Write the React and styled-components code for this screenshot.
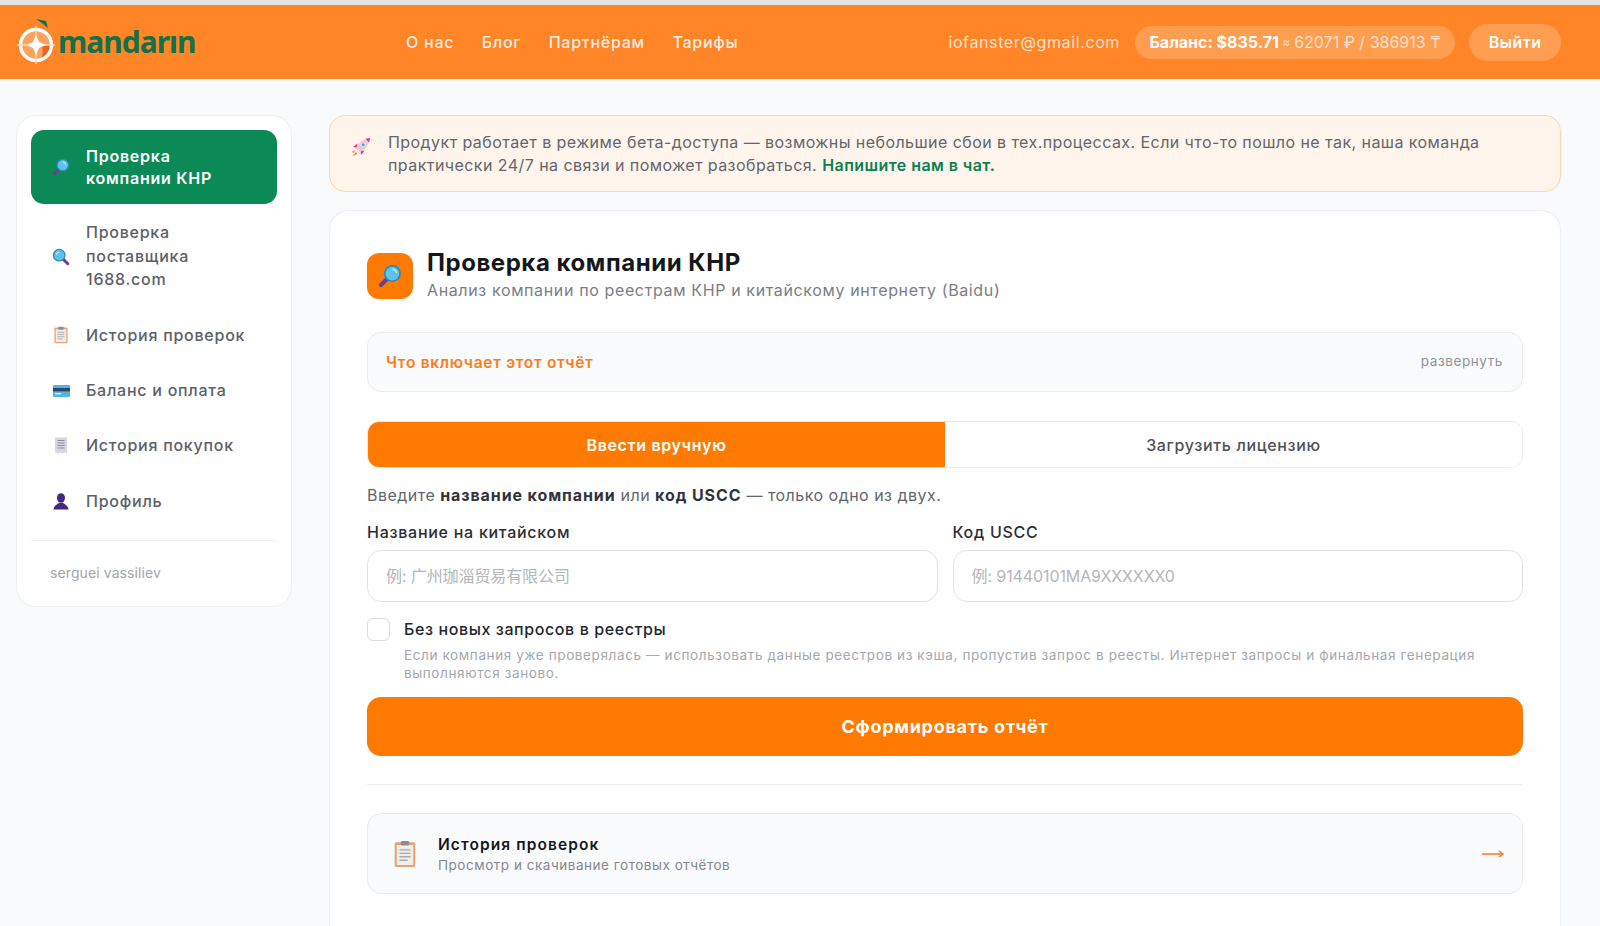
import React from 'react'
import styled, { createGlobalStyle } from 'styled-components'

const GlobalStyle = createGlobalStyle`
  html, body {
    margin: 0;
    height: 100%;
    overflow: hidden;
    background: #f8fafc;
  }
  * {
    box-sizing: border-box;
  }
  body {
    font-family: Inter, "Noto Sans CJK SC", "Noto Sans", sans-serif;
    color: #14171c;
  }
`

const TopStrip = styled.div`
  height: 5px;
  background: #e4e4e4;
`

const Header = styled.header`
  height: 74px;
  background: #ff8526;
  display: flex;
  align-items: center;
  padding: 0 39px 0 16px;
`

const Logo = styled.div`
  width: 390px;
  display: flex;
  align-items: center;
  gap: 2px;
`

const LogoText = styled.span`
  font-family: "Noto Sans", sans-serif;
  font-size: 30px;
  font-weight: 700;
  letter-spacing: -1px;
  color: #12704a;
  line-height: 1;
`

const Nav = styled.nav`
  display: flex;
  gap: 27.5px;
`

const NavLink = styled.a`
  color: rgba(255, 255, 255, 0.88);
  font-size: 16px;
  font-weight: 500;
  letter-spacing: 0.75px;
`

const HeaderRight = styled.div`
  margin-left: auto;
  display: flex;
  align-items: center;
`

const Email = styled.span`
  color: rgba(255, 255, 255, 0.78);
  font-size: 16px;
  letter-spacing: 0.62px;
  margin-right: 15px;
`

const BalancePill = styled.div`
  height: 33px;
  width: 320px;
  border-radius: 17px;
  background: rgba(255, 255, 255, 0.2);
  display: flex;
  align-items: center;
  justify-content: center;
  font-size: 16px;
  color: rgba(255, 255, 255, 0.72);
  white-space: nowrap;
  margin-right: 14px;
`

const BalanceStrong = styled.strong`
  color: #fff;
  font-weight: 700;
  letter-spacing: 0;
  margin-right: 4px;
`

const Approx = styled.span`
  font-size: 11px;
  margin-right: 4px;
`

const LogoutButton = styled.button`
  width: 92px;
  height: 37px;
  border: 0;
  border-radius: 19px;
  background: rgba(255, 255, 255, 0.2);
  color: #fff;
  font: 600 16px Inter, sans-serif;
  letter-spacing: 0.4px;
`

const Page = styled.div`
  display: grid;
  grid-template-columns: 276px 1232px;
  gap: 37px;
  padding: 36px 39px 0 16px;
  height: 847px;
  overflow: hidden;
  align-items: start;
`

const Sidebar = styled.aside`
  background: #fff;
  border: 1px solid #eceff3;
  border-radius: 20px;
  padding: 14px;
  height: 492px;
`

const SideList = styled.div`
  display: flex;
  flex-direction: column;
  gap: 3px;
`

const SideItem = styled.a`
  display: flex;
  align-items: center;
  gap: 15px;
  padding: ${p => (p.$active ? '15px' : '14.4px')} 20px;
  border-radius: 13px;
  font-size: 16px;
  line-height: ${p => (p.$active ? '22px' : '23.5px')};
  font-weight: ${p => (p.$active ? 600 : 500)};
  letter-spacing: 0.75px;
  background: ${p => (p.$active ? '#0b8a58' : 'transparent')};
  color: ${p => (p.$active ? '#fff' : '#5c6068')};
`

const SideIcon = styled.span`
  flex: 0 0 20px;
  display: flex;
  justify-content: center;
`

const SideDivider = styled.hr`
  border: 0;
  border-top: 1px solid #eceef1;
  margin: 13px 0 0;
`

const SideUser = styled.div`
  padding: 23px 19px 0;
  font-size: 14px;
  line-height: 18px;
  color: #a3a6ab;
  letter-spacing: 0.1px;
`

const Main = styled.main`
  display: flex;
  flex-direction: column;
  gap: 18px;
`

const Banner = styled.div`
  height: 77px;
  background: #fff5ec;
  border: 1px solid #fdd5b5;
  border-radius: 16px;
  padding: 15px 40px 0 21px;
  display: flex;
  gap: 17px;
`

const BannerIcon = styled.span`
  flex: 0 0 20px;
  padding-top: 6px;
`

const BannerText = styled.div`
  font-size: 16px;
  line-height: 23.4px;
  letter-spacing: 0.44px;
  color: #62666d;
`

const BannerLine = styled.div`
  white-space: nowrap;
`

const BannerLink = styled.a`
  color: #0b8050;
  font-weight: 600;
  margin-left: 5px;
`

const Panel = styled.section`
  background: #fff;
  border: 1px solid #eceff3;
  border-bottom: 0;
  border-radius: 20px 20px 0 0;
  padding: 42px 37px 0 37px;
  height: 760px;
`

const TitleRow = styled.div`
  display: flex;
  align-items: center;
  gap: 14px;
  height: 46px;
`

const TitleIcon = styled.div`
  width: 46px;
  height: 46px;
  border-radius: 12px;
  background: #ff7a00;
  display: flex;
  align-items: center;
  justify-content: center;
`

const Title = styled.h1`
  margin: -2px 0 0;
  font-size: 24px;
  line-height: 27px;
  font-weight: 700;
  letter-spacing: 0.55px;
`

const Subtitle = styled.p`
  margin: 3px 0 0;
  font-size: 16px;
  line-height: 22px;
  color: #7a7e85;
  letter-spacing: 0.63px;
`

const Accordion = styled.div`
  margin-top: 33px;
  height: 60px;
  border: 1px solid #e9ebef;
  border-radius: 14px;
  background: #fafbfc;
  display: flex;
  align-items: center;
  justify-content: space-between;
  padding: 0 19px 0 18px;
`

const AccordionTitle = styled.span`
  color: #ff7a1a;
  font-size: 15.5px;
  font-weight: 600;
  letter-spacing: 0.7px;
`

const AccordionHint = styled.span`
  color: #8f9298;
  font-size: 13.5px;
  letter-spacing: 0.6px;
  margin-bottom: 3px;
`

const Tabs = styled.div`
  margin-top: 29px;
  height: 47px;
  display: grid;
  grid-template-columns: 1fr 1fr;
  border: 1px solid #e9ebef;
  border-radius: 12px;
  overflow: hidden;
`

const Tab = styled.button`
  border: 0;
  font: 600 16px Inter, sans-serif;
  letter-spacing: 0.65px;
  background: ${p => (p.$active ? '#ff7a00' : '#fff')};
  color: ${p => (p.$active ? '#fff' : '#4d5158')};
  font-weight: ${p => (p.$active ? 600 : 500)};
`

const Hint = styled.p`
  margin: 16px 0 0;
  font-size: 16px;
  line-height: 22px;
  color: #62666d;
  letter-spacing: 0.48px;
  strong {
    color: #30343a;
    font-weight: 700;
    letter-spacing: 0.9px;
  }
`

const FieldGrid = styled.div`
  margin-top: 16px;
  display: grid;
  grid-template-columns: 1fr 1fr;
  gap: 15px;
`

const Field = styled.label`
  display: flex;
  flex-direction: column;
  gap: 8px;
`

const FieldLabel = styled.span`
  font-size: 16px;
  line-height: 20px;
  font-weight: 500;
  color: #2a2e34;
  letter-spacing: 0.73px;
`

const Input = styled.input`
  height: 52px;
  border: 1px solid #dfe2e6;
  border-radius: 14px;
  padding: 0 18px;
  background: #fff;
  font: 16px Inter, "Noto Sans CJK SC", sans-serif;
  letter-spacing: -0.1px;
  &::placeholder {
    color: #b4b6ba;
    opacity: 1;
  }
`

const CheckRow = styled.div`
  margin-top: 16px;
  display: flex;
  gap: 14px;
`

const CheckBox = styled.span`
  flex: 0 0 23px;
  height: 23px;
  border: 1px solid #d9dce0;
  border-radius: 6px;
  background: #fff;
`

const CheckLabel = styled.div`
  font-size: 16px;
  line-height: 23px;
  font-weight: 500;
  color: #23272d;
  letter-spacing: 0.6px;
`

const CheckHelp = styled.p`
  margin: 5px 0 0;
  font-size: 13.5px;
  line-height: 18px;
  font-weight: 400;
  color: #a5a8ad;
  letter-spacing: 0.62px;
`

const SubmitButton = styled.button`
  margin-top: 15px;
  width: 100%;
  height: 59px;
  border: 0;
  border-radius: 14px;
  background: #ff7a00;
  color: #fff;
  font: 700 18px Inter, sans-serif;
  letter-spacing: 0.73px;
`

const Divider = styled.hr`
  border: 0;
  border-top: 1px solid #eceef1;
  margin: 28px 0;
`

const HistoryCard = styled.a`
  height: 81px;
  border: 1px solid #e9ebef;
  border-radius: 14px;
  background: #fafbfc;
  display: flex;
  align-items: center;
  padding: 0 18px 0 26px;
  gap: 22px;
`

const HistoryText = styled.div`
  flex: 1;
  padding-top: 2px;
`

const HistoryTitle = styled.div`
  font-size: 15.5px;
  line-height: 20px;
  font-weight: 600;
  letter-spacing: 1.1px;
`

const HistorySub = styled.div`
  font-size: 13.5px;
  line-height: 20px;
  color: #85888e;
  letter-spacing: 0.53px;
`

const MandarinMark = () => (
  <svg width="40" height="50" viewBox="0 0 40 50">
    <path d="M20 2 L30 4 L32 11 Q25 5 20 2Z" fill="#12704a" />
    <circle cx="20" cy="28" r="17" fill="#ffa35c" />
    <path d="M24 45 A17 17 0 0 0 37 28 L26 28 Q28 38 24 45Z" fill="#f0641e" />
    <circle cx="20" cy="28" r="15.5" fill="none" stroke="#fff" strokeWidth="3.4" />
    <path d="M20 9 V47 M1 28 H39" stroke="#ffd9b8" strokeWidth="1.4" />
    <path d="M20 18 L23 25 L30 28 L23 31 L20 38 L17 31 L10 28 L17 25Z" fill="#fff" />
  </svg>
)

const Magnifier = ({ size = 20, flip }) => (
  <svg width={size} height={size} viewBox="0 0 20 20">
    <g transform={flip ? 'translate(20 0) scale(-1 1)' : undefined}>
      <path d="M11.5 11.5 L17.5 17.5" stroke="#6a3f96" strokeWidth="3.4" strokeLinecap="round" />
      <circle cx="8" cy="8" r="6.4" fill="#5cc4ea" stroke="#2f86b8" strokeWidth="1.4" />
      <path d="M4.6 7.5 A3.6 3.6 0 0 1 8 4.4" stroke="#c3ecfa" strokeWidth="1.2" fill="none" />
    </g>
  </svg>
)

const Clipboard = ({ width = 16, height = 20 }) => (
  <svg width={width} height={height} viewBox="0 0 16 20">
    <rect x="0.5" y="1.5" width="15" height="18" rx="1.2" fill="#e9a36f" />
    <rect x="2" y="3.5" width="12" height="14.5" fill="#f0edea" />
    <rect x="5" y="0.5" width="6" height="3.4" rx="1" fill="#8b8e93" />
    <path d="M4 7H12 M4 9.5H12 M4 12H12 M4 14.5H10" stroke="#a9abb0" strokeWidth="1" />
  </svg>
)

const Card = () => (
  <svg width="17" height="12" viewBox="0 0 17 12">
    <rect width="17" height="12" rx="1" fill="#54b4e0" />
    <rect y="3" width="17" height="3.4" fill="#2b4a68" />
    <rect x="2" y="8" width="6" height="1.4" fill="#d4eef9" />
  </svg>
)

const Receipt = () => (
  <svg width="14" height="17" viewBox="0 0 14 17">
    <path d="M1 0.5H13V16.5L10.8 15.4 8.6 16.5 6.4 15.4 4.2 16.5 1 15.4Z" fill="#d8d6e2" />
    <path d="M3.5 3.5H10.5 M3.5 6H10.5 M3.5 8.5H10.5 M3.5 11H10.5" stroke="#8d8c9c" strokeWidth="1" />
  </svg>
)

const Person = () => (
  <svg width="16" height="17" viewBox="0 0 16 17">
    <ellipse cx="8" cy="5" rx="4" ry="4.8" fill="#45287f" />
    <path d="M0.5 16.5 C1 12.5 4 11.5 6 10 H10 C12 11.5 15 12.5 15.5 16.5Z" fill="#45287f" />
  </svg>
)

const Rocket = () => (
  <svg width="20" height="20" viewBox="0 0 20 20">
    <path d="M4 13 L1 15 L3 16Z M5 15 L1.5 19 L6 17Z" fill="#ff7a1a" />
    <path d="M6 10.5 L2 10 L6.5 6.5Z M9.5 14 L10 18 L13.5 13.5Z" fill="#ee2f86" />
    <path d="M5 11 C7 6 12 2 19 1 C18 8 14 13 9 15Z" fill="#eec6d8" />
    <path d="M14.5 1.8 L19 1 L18.2 5.5Z" fill="#ee2f86" />
    <circle cx="12.2" cy="7.8" r="2" fill="#4da6d4" stroke="#fff" strokeWidth="0.7" />
  </svg>
)

const ThinArrow = () => (
  <svg width="22" height="10" viewBox="0 0 22 10">
    <path d="M0 5H21 M17 2L21 5L17 8" stroke="#ff7a1a" strokeWidth="1.4" fill="none" />
  </svg>
)

const menu = [
  { label: 'Проверка компании КНР', icon: <Magnifier size={18} flip />, active: true, maxWidth: 150 },
  { label: 'Проверка поставщика 1688.com', icon: <Magnifier size={18} />, maxWidth: 130 },
  { label: 'История проверок', icon: <Clipboard width={14} height={18} /> },
  { label: 'Баланс и оплата', icon: <Card /> },
  { label: 'История покупок', icon: <Receipt /> },
  { label: 'Профиль', icon: <Person /> },
]

const SideLabel = styled.span`
  max-width: ${p => (p.$maxWidth ? `${p.$maxWidth}px` : 'none')};
`

const App = () => {
  return (
    <>
      <GlobalStyle />
      <TopStrip />
      <Header>
        <Logo>
          <MandarinMark />
          <LogoText>mandarın</LogoText>
        </Logo>
        <Nav>
          <NavLink>О нас</NavLink>
          <NavLink>Блог</NavLink>
          <NavLink>Партнёрам</NavLink>
          <NavLink>Тарифы</NavLink>
        </Nav>
        <HeaderRight>
          <Email>iofanster@gmail.com</Email>
          <BalancePill>
            <BalanceStrong>Баланс: $835.71</BalanceStrong>
            <Approx>≈</Approx>
            62071 ₽ / 386913 ₸
          </BalancePill>
          <LogoutButton>Выйти</LogoutButton>
        </HeaderRight>
      </Header>
      <Page>
        <Sidebar>
          <SideList>
            {menu.map(item => (
              <SideItem key={item.label} $active={item.active}>
                <SideIcon>{item.icon}</SideIcon>
                <SideLabel $maxWidth={item.maxWidth}>{item.label}</SideLabel>
              </SideItem>
            ))}
          </SideList>
          <SideDivider />
          <SideUser>serguei vassiliev</SideUser>
        </Sidebar>
        <Main>
          <Banner>
            <BannerIcon>
              <Rocket />
            </BannerIcon>
            <BannerText>
              <BannerLine>
                Продукт работает в режиме бета-доступа — возможны небольшие сбои в тех.процессах. Если что-то пошло не так, наша команда
              </BannerLine>
              <BannerLine>
                практически 24/7 на связи и поможет разобраться.
                <BannerLink>Напишите нам в чат.</BannerLink>
              </BannerLine>
            </BannerText>
          </Banner>
          <Panel>
            <TitleRow>
              <TitleIcon>
                <Magnifier size={24} flip />
              </TitleIcon>
              <div>
                <Title>Проверка компании КНР</Title>
                <Subtitle>Анализ компании по реестрам КНР и китайскому интернету (Baidu)</Subtitle>
              </div>
            </TitleRow>
            <Accordion>
              <AccordionTitle>Что включает этот отчёт</AccordionTitle>
              <AccordionHint>развернуть</AccordionHint>
            </Accordion>
            <Tabs>
              <Tab $active>Ввести вручную</Tab>
              <Tab>Загрузить лицензию</Tab>
            </Tabs>
            <Hint>
              Введите <strong>название компании</strong> или <strong>код USCC</strong> — только одно из двух.
            </Hint>
            <FieldGrid>
              <Field>
                <FieldLabel>Название на китайском</FieldLabel>
                <Input placeholder="例: 广州珈淄贸易有限公司" />
              </Field>
              <Field>
                <FieldLabel>Код USCC</FieldLabel>
                <Input placeholder="例: 91440101MA9XXXXXX0" />
              </Field>
            </FieldGrid>
            <CheckRow>
              <CheckBox />
              <CheckLabel>
                Без новых запросов в реестры
                <CheckHelp>
                  Если компания уже проверялась — использовать данные реестров из кэша, пропустив запрос в реесты. Интернет запросы и финальная генерация выполняются заново.
                </CheckHelp>
              </CheckLabel>
            </CheckRow>
            <SubmitButton>Сформировать отчёт</SubmitButton>
            <Divider />
            <HistoryCard>
              <Clipboard width={22} height={28} />
              <HistoryText>
                <HistoryTitle>История проверок</HistoryTitle>
                <HistorySub>Просмотр и скачивание готовых отчётов</HistorySub>
              </HistoryText>
              <ThinArrow />
            </HistoryCard>
          </Panel>
        </Main>
      </Page>
    </>
  )
}

export default App
